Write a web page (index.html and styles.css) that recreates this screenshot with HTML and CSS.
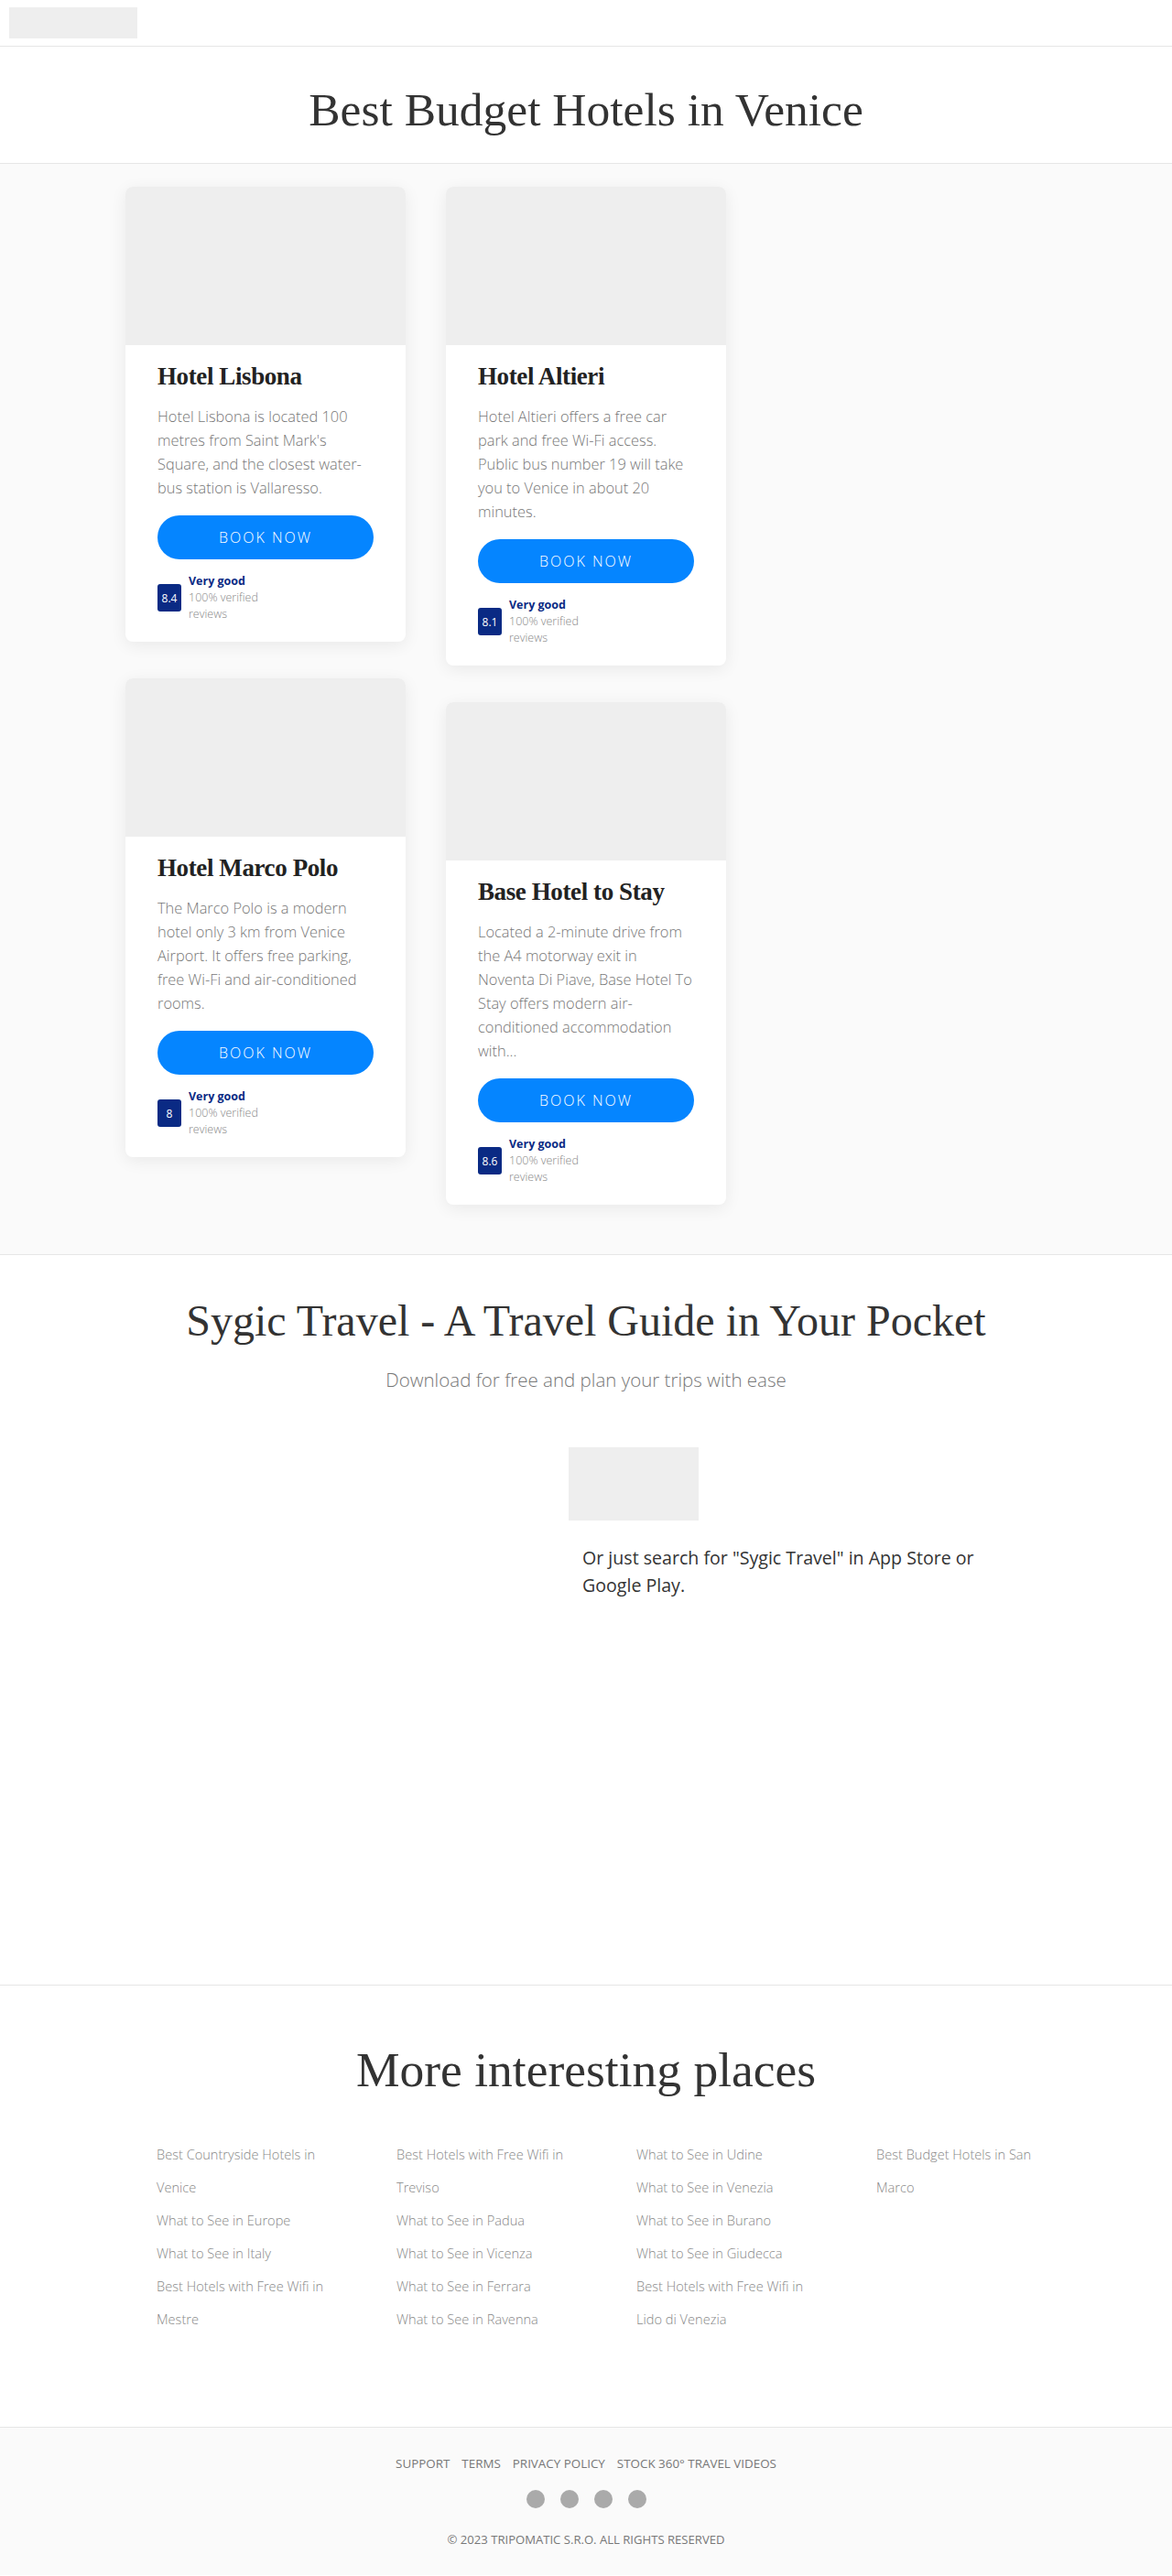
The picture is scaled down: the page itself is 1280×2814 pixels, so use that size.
FILE: index.html
```html
<!DOCTYPE html>
<html lang="en">
<head>
<meta charset="utf-8">
<title>Best Budget Hotels in Venice</title>
<link rel="stylesheet" href="styles.css">
</head>
<body>
<header class="topbar">
  <div class="logo"></div>
</header>

<section class="hero">
  <h1 class="page-title">Best Budget Hotels in Venice</h1>
</section>

<section class="hotels">
  <div class="hotel-grid">
    <div class="hotel-col">
      <article class="card">
        <div class="card-img"></div>
        <div class="card-body">
          <h2 class="card-title">Hotel Lisbona</h2>
          <p class="card-text">Hotel Lisbona is located 100 metres from Saint Mark's Square, and the closest water-bus station is Vallaresso.</p>
          <a class="btn" href="#">BOOK NOW</a>
          <div class="rating">
            <span class="score">8.4</span>
            <div class="rating-text"><strong>Very good</strong><span>100% verified reviews</span></div>
          </div>
        </div>
      </article>
      <article class="card">
        <div class="card-img"></div>
        <div class="card-body">
          <h2 class="card-title">Hotel Marco Polo</h2>
          <p class="card-text">The Marco Polo is a modern hotel only 3 km from Venice Airport. It offers free parking, free Wi-Fi and air-conditioned rooms.</p>
          <a class="btn" href="#">BOOK NOW</a>
          <div class="rating">
            <span class="score">8</span>
            <div class="rating-text"><strong>Very good</strong><span>100% verified reviews</span></div>
          </div>
        </div>
      </article>
    </div>
    <div class="hotel-col">
      <article class="card">
        <div class="card-img"></div>
        <div class="card-body">
          <h2 class="card-title">Hotel Altieri</h2>
          <p class="card-text">Hotel Altieri offers a free car park and free Wi-Fi access. Public bus number 19 will take you to Venice in about 20 minutes.</p>
          <a class="btn" href="#">BOOK NOW</a>
          <div class="rating">
            <span class="score">8.1</span>
            <div class="rating-text"><strong>Very good</strong><span>100% verified reviews</span></div>
          </div>
        </div>
      </article>
      <article class="card">
        <div class="card-img"></div>
        <div class="card-body">
          <h2 class="card-title">Base Hotel to Stay</h2>
          <p class="card-text">Located a 2-minute drive from the A4 motorway exit in Noventa Di Piave, Base Hotel To Stay offers modern air-conditioned accommodation with...</p>
          <a class="btn" href="#">BOOK NOW</a>
          <div class="rating">
            <span class="score">8.6</span>
            <div class="rating-text"><strong>Very good</strong><span>100% verified reviews</span></div>
          </div>
        </div>
      </article>
    </div>
    <div class="hotel-col"></div>
  </div>
</section>

<section class="app">
  <h2 class="section-title app-title">Sygic Travel - A Travel Guide in Your Pocket</h2>
  <p class="app-sub">Download for free and plan your trips with ease</p>
  <div class="app-row">
    <div class="app-phone"></div>
    <div class="app-info">
      <div class="app-badge"></div>
      <p class="app-text">Or just search for "Sygic Travel" in App Store or Google Play.</p>
    </div>
  </div>
</section>

<section class="more">
  <h2 class="section-title more-title">More interesting places</h2>
  <div class="links">
    <ul>
      <li><a href="#">Best Countryside Hotels in Venice</a></li>
      <li><a href="#">What to See in Europe</a></li>
      <li><a href="#">What to See in Italy</a></li>
      <li><a href="#">Best Hotels with Free Wifi in Mestre</a></li>
    </ul>
    <ul>
      <li><a href="#">Best Hotels with Free Wifi in Treviso</a></li>
      <li><a href="#">What to See in Padua</a></li>
      <li><a href="#">What to See in Vicenza</a></li>
      <li><a href="#">What to See in Ferrara</a></li>
      <li><a href="#">What to See in Ravenna</a></li>
    </ul>
    <ul>
      <li><a href="#">What to See in Udine</a></li>
      <li><a href="#">What to See in Venezia</a></li>
      <li><a href="#">What to See in Burano</a></li>
      <li><a href="#">What to See in Giudecca</a></li>
      <li><a href="#">Best Hotels with Free Wifi in Lido di Venezia</a></li>
    </ul>
    <ul>
      <li><a href="#">Best Budget Hotels in San Marco</a></li>
    </ul>
  </div>
</section>

<footer class="footer">
  <nav class="footer-nav">
    <a href="#">SUPPORT</a>
    <a href="#">TERMS</a>
    <a href="#">PRIVACY POLICY</a>
    <a href="#">STOCK 360° TRAVEL VIDEOS</a>
  </nav>
  <div class="social">
    <span class="dot"></span><span class="dot"></span><span class="dot"></span><span class="dot"></span>
  </div>
  <p class="copy">© 2023 TRIPOMATIC S.R.O. ALL RIGHTS RESERVED</p>
</footer>
</body>
</html>
```

FILE: styles.css
```css
* { box-sizing: border-box; }
html, body { margin: 0; padding: 0; }
body {
  font-family: "Open Sans", "Lato", sans-serif;
  font-weight: 300;
  color: #333;
  background: #fff;
}
a { text-decoration: none; color: inherit; }
h1, h2, p, ul { margin: 0; padding: 0; }

.topbar {
  height: 51px;
  border-bottom: 1px solid #e6e6e6;
  padding: 8px 10px 0;
}
.logo {
  width: 140px;
  height: 34px;
  background: #eeeeee;
}

.hero {
  padding: 39px 0 28px;
  border-bottom: 1px solid #e6e6e6;
  text-align: center;
}
.page-title, .section-title {
  font-family: "Liberation Serif", "Times New Roman", serif;
  font-weight: 400;
  font-size: 51.5px;
  line-height: 60px;
  color: #333;
  text-align: center;
}

.hotels {
  background: #fafafa;
  padding: 25px 0 14px;
  border-bottom: 1px solid #e6e6e6;
}
.hotel-grid {
  width: 1006px;
  margin: 0 auto;
  display: grid;
  grid-template-columns: repeat(3, 306px);
  column-gap: 44px;
  align-items: start;
}
.card {
  background: #fff;
  border-radius: 8px;
  overflow: hidden;
  box-shadow: 0 4px 18px rgba(0, 0, 0, 0.07);
  margin-bottom: 40px;
}
.card-img {
  height: 173px;
  background: #eeeeee;
}
.card-body {
  padding: 19px 35px 21px;
}
.card-title {
  font-family: "Liberation Serif", "Times New Roman", serif;
  font-weight: 700;
  font-size: 27px;
  line-height: 31px;
  color: #222;
  letter-spacing: -0.4px;
}
.card-text {
  margin-top: 15px;
  font-size: 16.4px;
  line-height: 26px;
  color: #777;
}
.btn {
  display: block;
  margin-top: 17px;
  height: 48px;
  line-height: 48px;
  border-radius: 24px;
  background: #0585ff;
  color: #fff;
  text-align: center;
  font-size: 16px;
  font-weight: 300;
  letter-spacing: 2px;
}
.rating {
  margin-top: 15px;
  display: flex;
  align-items: center;
  gap: 8px;
}
.score {
  width: 26px;
  height: 30px;
  border-radius: 3px;
  background: #0a2a84;
  color: #fff;
  font-size: 12px;
  font-weight: 400;
  display: flex;
  align-items: center;
  justify-content: center;
}
.rating-text {
  display: flex;
  flex-direction: column;
  width: 100px;
  font-size: 12.5px;
  line-height: 18px;
  color: #888;
}
.rating-text strong {
  color: #0a2a84;
  font-weight: 700;
}

.app {
  padding: 45px 0 0;
  height: 798px;
  border-bottom: 1px solid #e6e6e6;
}
.app-title { font-size: 48px; line-height: 54px; }
.app-sub {
  margin-top: 22px;
  text-align: center;
  font-size: 20.5px;
  line-height: 30px;
  color: #777;
}
.app-row {
  margin-top: 59px;
  display: grid;
  grid-template-columns: 621px 1fr;
}
.app-badge {
  width: 142px;
  height: 80px;
  background: #eeeeee;
}
.app-text {
  margin-top: 26px;
  padding-left: 15px;
  width: 490px;
  font-size: 19.6px;
  line-height: 30px;
  font-weight: 400;
  color: #333;
}

.more {
  padding: 62px 0 100px;
}
.more-title { font-size: 53.5px; }
.links {
  margin-top: 44px;
  padding-left: 171px;
  display: grid;
  grid-template-columns: repeat(4, 262px);
}
.links ul { list-style: none; }
.links li {
  width: 200px;
  font-size: 14.6px;
  line-height: 36px;
  color: #888;
}

.footer {
  background: #fafafa;
  border-top: 1px solid #e6e6e6;
  padding: 29px 0 29px;
  text-align: center;
  height: 162px;
}
.footer-nav {
  display: flex;
  justify-content: center;
  gap: 13px;
  font-size: 13.4px;
  line-height: 20px;
  color: #777;
  font-weight: 400;
}
.social {
  margin-top: 19px;
  display: flex;
  justify-content: center;
  gap: 17px;
}
.dot {
  width: 20px;
  height: 20px;
  border-radius: 50%;
  background: #aaaaaa;
}
.copy {
  margin-top: 24px;
  font-size: 13.1px;
  line-height: 20px;
  color: #777;
  font-weight: 400;
}
```
